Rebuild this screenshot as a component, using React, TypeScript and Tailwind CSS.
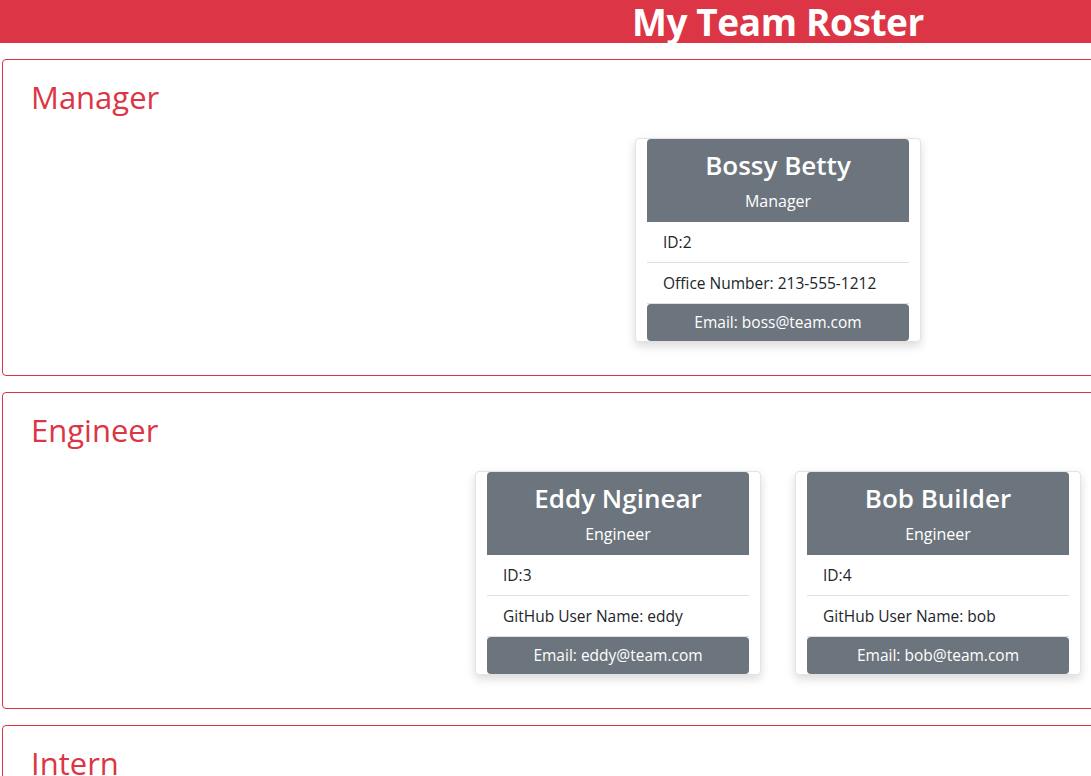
import React from 'react';

interface Member {
  name: string;
  role: string;
  id: number;
  extra: string;
  email: string;
}

const manager: Member[] = [
  { name: 'Bossy Betty', role: 'Manager', id: 2, extra: 'Office Number: 213-555-1212', email: 'boss@team.com' },
];

const engineers: Member[] = [
  { name: 'Eddy Nginear', role: 'Engineer', id: 3, extra: 'GitHub User Name: eddy', email: 'eddy@team.com' },
  { name: 'Bob Builder', role: 'Engineer', id: 4, extra: 'GitHub User Name: bob', email: 'bob@team.com' },
];

const MemberCard: React.FC<{ member: Member }> = ({ member }) => (
  <div className="w-[286px] bg-white border border-[#e3e3e3] rounded-[4px] shadow-[0_4px_10px_rgba(0,0,0,0.15)] px-[11px]">
    {/* header */}
    <div className="bg-[#6c757d] rounded-t-[4px] text-white text-center h-[83px] flex flex-col items-center">
      <h3 className="text-[26px] font-semibold leading-none mt-[13px]">{member.name}</h3>
      <p className="text-[16px] mt-[15px] leading-none">{member.role}</p>
    </div>
    <ul className="text-[15.5px] text-[#212529]">
      <li className="h-[41px] flex items-center px-[16px] pt-[1px] border-b border-[#dfdfdf]">ID:{member.id}</li>
      <li className="h-[41px] flex items-center px-[16px] pt-[1px] border-b border-[#dfdfdf]">{member.extra}</li>
    </ul>
    <div className="bg-[#6c757d] rounded-[4px] h-[37px] flex items-center justify-center text-white text-[15.5px] pt-[1px]">
      Email: {member.email}
    </div>
  </div>
);

const Section: React.FC<{ title: string; members: Member[] }> = ({ title, members }) => (
  <section className="mt-[16px] ml-[2px] w-[1552px] h-[317px] border border-[#dc3545] rounded-[4px] px-[28px] pt-[18px]">
    <h2 className="text-[31px] text-[#dc3545] font-medium leading-[38px]">{title}</h2>
    <div className="flex justify-center gap-[34px] mt-[22px]">
      {members.map((m) => (
        <MemberCard key={m.id} member={m} />
      ))}
    </div>
  </section>
);

export default function App() {
  return (
    <div className="w-screen h-screen overflow-hidden bg-white" style={{ fontFamily: '"Open Sans", "Noto Sans", sans-serif' }}>
      <div className="w-[1556px]">
        <header className="h-[43px] bg-[#dc3545] flex justify-center overflow-hidden">
          <h1 className="text-[37px] font-bold text-white leading-[43px] tracking-[-0.4px]">My Team Roster</h1>
        </header>
        <Section title="Manager" members={manager} />
        <Section title="Engineer" members={engineers} />
        <Section title="Intern" members={[]} />
      </div>
    </div>
  );
}
